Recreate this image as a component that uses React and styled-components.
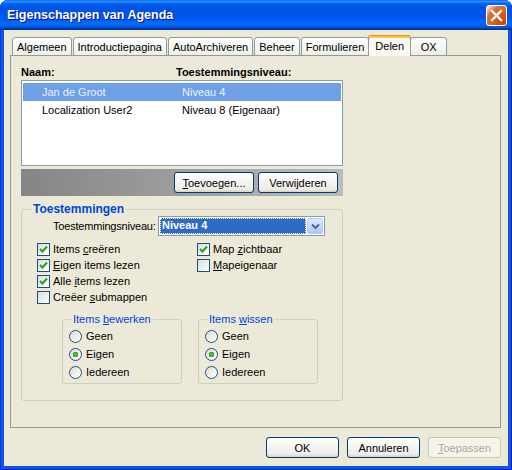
import React from 'react';
import styled, { createGlobalStyle } from 'styled-components';

const GlobalStyle = createGlobalStyle`
  html, body { margin: 0; padding: 0; background: #fff; }
  body {
    font-family: "Liberation Sans", Arial, sans-serif;
    font-size: 11px;
    color: #000;
  }
  * { box-sizing: border-box; }
`;

const tabs = ['Algemeen', 'Introductiepagina', 'AutoArchiveren', 'Beheer', 'Formulieren', 'Delen', 'OX'];

const users = [
  { name: 'Jan de Groot', level: 'Niveau 4', selected: true },
  { name: 'Localization User2', level: 'Niveau 8 (Eigenaar)' },
];

// label, access key index, checked
const leftChecks = [
  ['Items creëren', 6, true],
  ['Eigen items lezen', 0, true],
  ['Alle items lezen', 5, true],
  ['Creëer submappen', 7, false],
];
const rightChecks = [
  ['Map zichtbaar', 4, true],
  ['Mapeigenaar', 0, false],
];

const radioGroups = [
  { title: 'Items bewerken', key: 6 },
  { title: 'Items wissen', key: 6 },
];

function Mnemonic({ text, at }) {
  if (at == null || at < 0) return <span>{text}</span>;
  return (
    <span>
      {text.slice(0, at)}
      <u>{text[at]}</u>
      {text.slice(at + 1)}
    </span>
  );
}

export default function App() {
  return (
    <>
      <GlobalStyle />
      <Window>
        <TitleBar>
          <Title>Eigenschappen van Agenda</Title>
          <CloseButton>
            <svg width="13" height="13" viewBox="0 0 13 13">
              <path d="M2 2 L11 11 M11 2 L2 11" stroke="#fff" strokeWidth="2.4" strokeLinecap="square" />
            </svg>
          </CloseButton>
        </TitleBar>

        <Body>
          <TabStrip>
            {tabs.map((t) => (
              <Tab key={t} $active={t === 'Delen'}>{t}</Tab>
            ))}
          </TabStrip>

          <Panel>
            <ListHeader>
              <HeadCell $w={155}>Naam:</HeadCell>
              <HeadCell>Toestemmingsniveau:</HeadCell>
            </ListHeader>
            <ListBox>
              {users.map((u) => (
                <ListRow key={u.name} $selected={u.selected}>
                  <NameCell>{u.name}</NameCell>
                  <span>{u.level}</span>
                </ListRow>
              ))}
            </ListBox>

            <ActionBar>
              <Button $w={80}><Mnemonic text="Toevoegen..." at={0} /></Button>
              <Button $w={80}>Verwijderen</Button>
            </ActionBar>

            <Group>
              <GroupTitle>Toestemmingen</GroupTitle>
              <LevelRow>
                <LevelLabel>Toestemmingsniveau:</LevelLabel>
                <Select>
                  <SelectValue>Niveau 4</SelectValue>
                  <DropButton>
                    <svg width="9" height="7" viewBox="0 0 9 7">
                      <path d="M1 1.5 L4.5 5 L8 1.5" fill="none" stroke="#4D6185" strokeWidth="1.8" />
                    </svg>
                  </DropButton>
                </Select>
              </LevelRow>

              <CheckColumns>
                <CheckColumn $w={160}>
                  {leftChecks.map(([label, k, on]) => (
                    <Check key={label}>
                      <CheckBox>{on && <Tick />}</CheckBox>
                      <Mnemonic text={label} at={k} />
                    </Check>
                  ))}
                </CheckColumn>
                <CheckColumn>
                  {rightChecks.map(([label, k, on]) => (
                    <Check key={label}>
                      <CheckBox>{on && <Tick />}</CheckBox>
                      <Mnemonic text={label} at={k} />
                    </Check>
                  ))}
                </CheckColumn>
              </CheckColumns>

              <SubGroups>
                {radioGroups.map((g) => (
                  <SubGroup key={g.title}>
                    <SubTitle><Mnemonic text={g.title} at={g.key} /></SubTitle>
                    {['Geen', 'Eigen', 'Iedereen'].map((opt) => (
                      <Radio key={opt}>
                        <RadioDot $on={opt === 'Eigen'} />
                        <span>{opt}</span>
                      </Radio>
                    ))}
                  </SubGroup>
                ))}
              </SubGroups>
            </Group>
          </Panel>

          <Footer>
            <Button $w={73}>OK</Button>
            <Button $w={73}>Annuleren</Button>
            <Button $w={73} disabled><Mnemonic text="Toepassen" at={0} /></Button>
          </Footer>
        </Body>
      </Window>
    </>
  );
}

function Tick() {
  return (
    <svg width="9" height="9" viewBox="0 0 9 9">
      <path d="M1 4 L3.4 6.5 L8 1.5" fill="none" stroke="#21A121" strokeWidth="2" />
    </svg>
  );
}

const Window = styled.div`
  width: 512px;
  height: 470px;
  display: flex;
  flex-direction: column;
  background: #0856E6;
  border-radius: 8px 8px 0 0;
  overflow: hidden;
  box-shadow: inset 1px 0 #0831D9, inset -1px 0 #001EA0, inset 0 -1px #001EA0;
`;

const TitleBar = styled.div`
  height: 30px;
  flex: none;
  display: flex;
  align-items: center;
  justify-content: space-between;
  padding: 0 5px 0 7px;
  background: linear-gradient(180deg, #0058ee 0%, #3593ff 4%, #288eff 6%, #127dff 8%, #036ffc 10%,
    #0262ee 14%, #0057e5 20%, #0054e3 24%, #0055eb 56%, #005bf5 66%, #026afe 76%,
    #0062ef 86%, #0052d6 92%, #0040ab 94%, #003092 100%);
`;

const Title = styled.div`
  color: #fff;
  font-family: "Liberation Sans", Arial, sans-serif;
  font-weight: bold;
  font-size: 12.5px;
  text-shadow: 1px 1px #0f1089;
`;

const CloseButton = styled.div`
  width: 21px;
  height: 21px;
  border: 1px solid #fff;
  border-radius: 3px;
  display: flex;
  align-items: center;
  justify-content: center;
  background: radial-gradient(circle at 90% 90%, #cc4600 0%, #dc6527 55%, #cd7546 70%, #ffccb2 90%, #fff 100%);
`;

const Body = styled.div`
  flex: 1;
  display: flex;
  flex-direction: column;
  margin: 0 4px 4px;
  padding: 5px 7px 0 6px;
  background: #ECE9D8;
`;

const TabStrip = styled.div`
  display: flex;
  align-items: flex-end;
  gap: 1px;
  height: 21px;
  padding-left: 2px;
  position: relative;
  z-index: 1;
  margin-bottom: -1px;
`;

const Tab = styled.div`
  min-width: ${(p) => (p.$active ? 41 : 37)}px;
  height: ${(p) => (p.$active ? 21 : 19)}px;
  padding: ${(p) => (p.$active ? '3px 6px 0' : '2px 4px 0')};
  margin: ${(p) => (p.$active ? '0 -2px' : '0')};
  line-height: 14px;
  text-align: center;
  border: 1px solid #919B9C;
  border-bottom: ${(p) => (p.$active ? 'none' : '1px solid #919B9C')};
  border-top-color: ${(p) => (p.$active ? '#E68B2C' : '#919B9C')};
  border-radius: 3px 3px 0 0;
  white-space: nowrap;
  position: relative;
  z-index: ${(p) => (p.$active ? 2 : 0)};
  background: ${(p) =>
    p.$active
      ? '#F9F8F3'
      : 'linear-gradient(180deg, #fff, #fafaf9 26%, #f0f0ea 95%, #ecebe6)'};
  box-shadow: ${(p) => (p.$active ? 'inset 0 2px #FFC73C' : 'none')};
`;

const Panel = styled.div`
  flex: 1;
  border: 1px solid #919B9C;
  padding: 9px 10px 0;
  background: #ECE9D8;
`;

const ListHeader = styled.div`
  display: flex;
  height: 14px;
  line-height: 14px;
  font-weight: bold;
  margin-bottom: 1px;
`;

const HeadCell = styled.div`
  width: ${(p) => (p.$w ? `${p.$w}px` : 'auto')};
`;

const ListBox = styled.div`
  width: 322px;
  height: 86px;
  border: 1px solid #7F9DB9;
  background: #fff;
  padding: 2px 1px;
`;

const ListRow = styled.div`
  display: flex;
  height: 18px;
  align-items: center;
  background: ${(p) => (p.$selected ? '#6FA0E6' : 'transparent')};
  color: ${(p) => (p.$selected ? '#EAF1FF' : '#000')};
`;

const NameCell = styled.span`
  width: 159px;
  padding-left: 19px;
`;

const ActionBar = styled.div`
  width: 322px;
  height: 27px;
  margin-top: 3px;
  padding: 3px 5px 0;
  display: flex;
  justify-content: flex-end;
  gap: 4px;
  background: linear-gradient(90deg, #858585 0%, #9e9e9e 50%, #bcbcbc 100%);
`;

const Button = styled.button`
  width: ${(p) => p.$w}px;
  height: 21px;
  padding: 0;
  font: inherit;
  font-size: 11px;
  color: ${(p) => (p.disabled ? '#ACA899' : '#000')};
  border: 1px solid ${(p) => (p.disabled ? '#C9C7BA' : '#003C74')};
  border-radius: 3px;
  background: ${(p) =>
    p.disabled ? '#F5F4EA' : 'linear-gradient(180deg, #fff, #ecebe5 86%, #d8d0c4)'};
`;

const Group = styled.fieldset`
  width: 322px;
  min-width: 0;
  margin: 6px 0 0;
  padding: 0 14px 16px 15px;
  border: 1px solid #D0D0BF;
  border-radius: 3px;
`;

const GroupTitle = styled.legend`
  margin-left: -6px;
  padding: 0 2px;
  line-height: 14px;
  font-size: 12px;
  font-weight: bold;
  color: #0046D5;
`;

const LevelRow = styled.div`
  display: flex;
  align-items: center;
  justify-content: space-between;
  width: 272px;
  margin-left: 16px;
  height: 20px;
`;

const LevelLabel = styled.span`
  letter-spacing: -0.2px;
  white-space: nowrap;
`;

const Select = styled.div`
  width: 167px;
  height: 20px;
  flex: none;
  border: 1px solid #7F9DB9;
  background: #fff;
  display: flex;
  align-items: center;
  padding: 1px;
`;

const SelectValue = styled.div`
  flex: 1;
  height: 16px;
  line-height: 14px;
  padding-left: 2px;
  color: #fff;
  font-weight: bold;
  background: #316AC5;
  outline: 1px dotted #fff;
  outline-offset: -1px;
`;

const DropButton = styled.div`
  width: 16px;
  height: 16px;
  margin-left: 1px;
  display: flex;
  align-items: center;
  justify-content: center;
  border: 1px solid #B9CBF3;
  border-radius: 2px;
  background: linear-gradient(180deg, #E1EAFE, #C3D3FD 60%, #B4C6F5);
`;

const CheckColumns = styled.div`
  display: flex;
  margin-top: 7px;
`;

const CheckColumn = styled.div`
  width: ${(p) => (p.$w ? `${p.$w}px` : 'auto')};
  flex: none;
  display: flex;
  flex-direction: column;
`;

const Check = styled.div`
  display: flex;
  align-items: flex-start;
  gap: 3px;
  height: 16px;
  line-height: 13px;
  white-space: nowrap;
`;

const CheckBox = styled.span`
  width: 13px;
  height: 13px;
  flex: none;
  border: 1px solid #1C5180;
  background: linear-gradient(135deg, #DCDCD7, #fff);
  display: flex;
  align-items: center;
  justify-content: center;
`;

const SubGroups = styled.div`
  display: flex;
  gap: 16px;
  margin: 6px 0 0 25px;
`;

const SubGroup = styled.fieldset`
  width: 120px;
  min-width: 0;
  margin: 0;
  padding: 1px 6px 2px;
  border: 1px solid #D0D0BF;
  border-radius: 3px;
`;

const SubTitle = styled.legend`
  margin-left: 2px;
  padding: 0 2px;
  line-height: 13px;
  color: #0046D5;
`;

const Radio = styled.div`
  display: flex;
  align-items: center;
  gap: 4px;
  height: 18px;
`;

const RadioDot = styled.span`
  width: 13px;
  height: 13px;
  flex: none;
  border-radius: 50%;
  border: 1px solid #1C5180;
  background: ${(p) =>
    p.$on
      ? 'radial-gradient(circle, #55D551 0, #21A121 2.5px, transparent 3px), linear-gradient(135deg, #DCDCD7, #fff)'
      : 'linear-gradient(135deg, #DCDCD7, #fff)'};
`;

const Footer = styled.div`
  display: flex;
  justify-content: flex-end;
  gap: 8px;
  padding: 9px 0 8px;
`;
